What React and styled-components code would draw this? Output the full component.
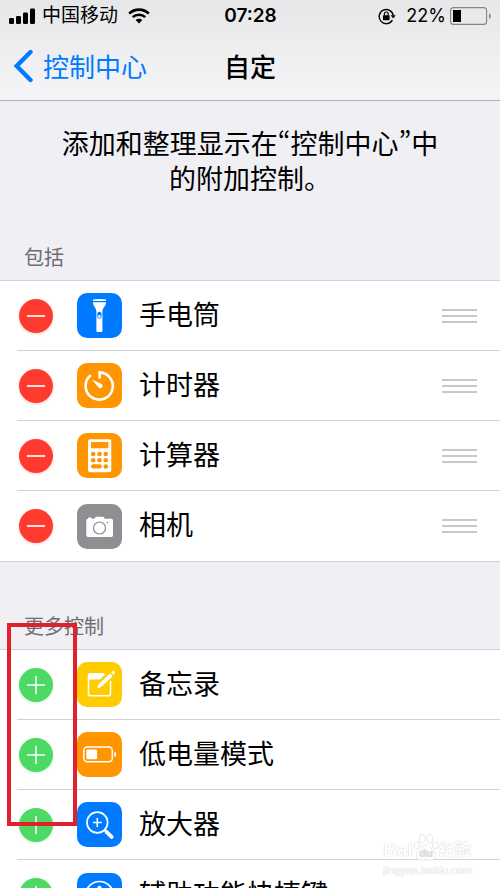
import styled, { createGlobalStyle } from "styled-components";

const GlobalStyle = createGlobalStyle`
  * {
    box-sizing: border-box;
  }
  body {
    margin: 0;
    background: #efeff4;
    color: #000;
    font-family: Inter, "Noto Sans CJK SC", sans-serif;
  }
`;

const Screen = styled.div`
  position: relative;
  display: flex;
  flex-direction: column;
  height: 100vh;
  overflow: hidden;
`;

const Header = styled.header`
  flex: none;
  background: linear-gradient(#e7e7e9, #f5f5f7);
  border-bottom: 1px solid #b2b2b6;
`;

const StatusBar = styled.div`
  display: grid;
  grid-template-columns: 1fr auto 1fr;
  align-items: center;
  height: 32px;
  padding: 0 8px 0 9px;
  font-size: 19px;
  line-height: 24px;
`;

const StatusGroup = styled.div`
  display: flex;
  align-items: center;
  justify-content: ${(props) => (props.$end ? "flex-end" : "flex-start")};
  svg {
    flex: none;
  }
`;

const Carrier = styled.span`
  margin: 0 10px 0 6px;
`;

const Time = styled.time`
  font-weight: 600;
`;

const Percent = styled.span`
  margin: 0 4px 0 10px;
  font-size: 18px;
`;

const NavBar = styled.nav`
  display: grid;
  grid-template-columns: 1fr auto 1fr;
  align-items: center;
  height: 68px;
  padding: 0 13px;
  font-family: "Noto Sans CJK SC", sans-serif;
`;

const BackLink = styled.a`
  display: flex;
  align-items: center;
  gap: 9px;
  color: #007aff;
  font-size: 26px;
  line-height: 34px;
  text-decoration: none;
`;

const Title = styled.h1`
  margin: 0;
  font-size: 26px;
  line-height: 34px;
  font-weight: 500;
`;

const Content = styled.main`
  flex: 1;
  min-height: 0;
  overflow-y: auto;
  scrollbar-width: none;
`;

/* pwid keeps the curly quotes narrow */
const Intro = styled.p`
  margin: 0;
  padding: 24px 56px 0;
  font-family: "Noto Sans CJK SC", sans-serif;
  font-feature-settings: "pwid";
  font-size: 27px;
  line-height: 35px;
  text-align: center;
`;

const Section = styled.section`
  position: relative;
  margin-top: 51px;
  & + & {
    margin-top: 53px;
  }
`;

const SectionTitle = styled.h2`
  margin: 0;
  padding: 0 24px 10px;
  color: #6d6d72;
  font-size: 20px;
  line-height: 24px;
  font-weight: 400;
`;

const List = styled.ul`
  display: grid;
  grid-auto-rows: 1fr;
  min-height: 282px;
  margin: 0;
  padding: 0 0 0 17px;
  list-style: none;
  background: #fff;
  border-top: 1px solid #d2d2d6;
  border-bottom: 1px solid #d2d2d6;
`;

const Row = styled.li`
  display: flex;
  align-items: center;
  padding: 0 23px 0 2px;
  border-bottom: 1px solid #d2d2d6;
  &:last-child {
    border-bottom: 0;
  }
`;

const RoundButton = styled.button`
  flex: none;
  display: flex;
  align-items: center;
  justify-content: center;
  width: 34px;
  height: 34px;
  padding: 0;
  border: 0;
  border-radius: 50%;
  color: #fff;
  background: ${(props) => (props.$add ? "#4cd964" : "#ff3b30")};
  box-shadow: 0 1px 3px ${(props) => (props.$add ? "#4cd96444" : "#ff3b3044")};
`;

const Tile = styled.span`
  flex: none;
  width: 45px;
  height: 45px;
  margin: 0 17px 0 24px;
  border-radius: 10px;
  background: ${(props) => props.$color};
  svg {
    display: block;
  }
`;

const Label = styled.span`
  flex: 1;
  font-size: 27px;
  line-height: 34px;
  white-space: nowrap;
`;

const Handle = styled.button`
  display: grid;
  gap: 4px;
  width: 35px;
  padding: 0;
  border: 0;
  background: none;
  cursor: grab;
  span {
    height: 2px;
    background: #c7c7cc;
  }
`;

/* marks the add buttons, lies over the list */
const Highlight = styled.div`
  position: absolute;
  top: 8px;
  left: 7px;
  width: 70px;
  height: 203px;
  border: 4px solid #e0202a;
  pointer-events: none;
`;

const Watermark = styled.div`
  position: absolute;
  right: 28px;
  bottom: 10px;
  color: #fff;
  font-family: "Liberation Sans", "Noto Sans CJK SC", sans-serif;
  text-shadow: 0 0 1px #ccc, 0 0 1px #ddd;
  pointer-events: none;
`;

const WatermarkLogo = styled.div`
  display: flex;
  align-items: flex-end;
  height: 30px;
  line-height: 24px;
  font-weight: 700;
`;

const WatermarkBrand = styled.span`
  font-size: 19px;
`;

const WatermarkCn = styled.span`
  font-size: 16px;
`;

const WatermarkUrl = styled.div`
  font-size: 11px;
  line-height: 16px;
`;

const SignalIcon = () => (
  <svg width="27" height="16" viewBox="0 0 27 16">
    <rect x="0" y="10" width="5" height="6" rx="1.3" />
    <rect x="7" y="8" width="5" height="8" rx="1.3" />
    <rect x="14" y="4.500" width="5" height="11.500" rx="1.3" />
    <rect x="21" y="0.500" width="5" height="15.500" rx="1.3" />
  </svg>
);

const WifiIcon = () => (
  <svg width="22" height="16" viewBox="0 0 22 16" fill="none" stroke="#000">
    <path d="M1.2 5.6a14 14 0 0 1 19.6 0" strokeWidth="2.7" />
    <path d="M4.7 9.2a9 9 0 0 1 12.6 0" strokeWidth="2.5" />
    <path d="M11 15.5 7.6 12.1a4.9 4.9 0 0 1 6.800 0z" fill="#000" stroke="none" />
  </svg>
);

const LockIcon = () => (
  <svg width="18" height="17" viewBox="0 0 18 17" fill="none" stroke="#000" strokeWidth="1.4">
    <path d="M14.4 12.2A7.1 7.1 0 1 1 15.3 7.4" />
    <path d="M12.6 7.2h5.2l-2.6 3.4z" fill="#000" stroke="none" />
    <rect x="5" y="7.2" width="6.6" height="5" rx="0.6" fill="#000" stroke="none" />
    <path d="M6.4 7.4V5.9a1.9 1.9 0 0 1 3.8 0v1.5" strokeWidth="1.2" />
  </svg>
);

const BatteryIcon = () => (
  <svg width="42" height="18" viewBox="0 0 42 18">
    <rect x="0.6" y="0.6" width="36" height="16.8" rx="3" fill="none" stroke="#858587" strokeWidth="1.1" />
    <rect x="3" y="3" width="8" height="12" />
    <path d="M39 6.2c2.4.8 2.4 4.8 0 5.6z" fill="#858587" />
  </svg>
);

const BackIcon = () => (
  <svg width="21" height="34" viewBox="0 0 21 34" fill="none" stroke="#007aff" strokeWidth="4.400">
    <path d="M17.500 3 3.700 17 17.500 31" strokeLinecap="round" />
  </svg>
);

const MinusIcon = () => (
  <svg width="18" height="18" viewBox="0 0 18 18" stroke="#fff" strokeWidth="1.7">
    <path d="M0 9h18" />
  </svg>
);

const PlusIcon = () => (
  <svg width="18" height="18" viewBox="0 0 18 18" stroke="#fff" strokeWidth="1.6">
    <path d="M0 9h18M9 0v18" />
  </svg>
);

const TileSvg = ({ children }) => (
  <svg width="45" height="45" viewBox="0 0 45 45" fill="#fff">
    {children}
  </svg>
);

const Flashlight = () => (
  <TileSvg>
    <path d="M16 6.5q6.5-1 13 0v1.5H16z" />
    <path d="M16 9.2h13c0 4.5-3.6 5.3-3.6 9.3V38q0 1-1 1h-4q-1 0-1-1V18.5c0-4-3.4-4.8-3.4-9.3z" />
    <rect x="20.3" y="18.7" width="4.2" height="7" rx="2.1" fill="#007aff" />
    <circle cx="22.400" cy="23.400" r="1.300" />
  </TileSvg>
);

const Timer = () => (
  <TileSvg>
    <path d="M13.8 12.3A13.6 13.6 0 1 0 22.6 9.400V15.500" fill="none" stroke="#fff" strokeWidth="2.6" />
    <path d="M14.8 16.4 24 20.8a2.3 2.3 0 1 1-2.8 3.2z" />
  </TileSvg>
);

const Calculator = () => (
  <TileSvg>
    <rect x="11" y="6.3" width="23.3" height="33" rx="2.2" />
    <g fill="#ff9500">
      <rect x="14" y="9" width="17.3" height="6.3" rx="0.6" />
      {[16.2, 22.5, 28.8].map((x) => (
        <g key={x}>
          <circle cx={x} cy="21" r="2.3" />
          <circle cx={x} cy="27.3" r="2.3" />
        </g>
      ))}
      <rect x="14" y="31.3" width="10.8" height="4.2" rx="2" />
      <circle cx="28.8" cy="33.500" r="2.3" />
    </g>
  </TileSvg>
);

const Camera = () => (
  <TileSvg>
    <path d="M11 14.8v-.8q0-.6.6-.6h2.500q.6 0 .6.6v.8h2.200c1.200 0 1.300-2 2.600-2h6.200c1.300 0 1.400 2 2.700 2h6q1.600 0 1.600 1.600v14.900q0 1.600-1.600 1.600H10.900q-1.600 0-1.600-1.600V16.400q0-1.600 1.600-1.600z" />
    <circle cx="22.5" cy="24" r="6" fill="none" stroke="#8e8e93" strokeWidth="1.2" />
    <circle cx="30.4" cy="18.6" r="0.9" fill="#8e8e93" />
  </TileSvg>
);

const Notes = () => (
  <TileSvg>
    <path
      d="M27 11.8H13.5q-2 0-2 2v18q0 2 2 2h18q2 0 2-2V19"
      fill="none"
      stroke="#fff"
      strokeWidth="1.6"
    />
    <path d="M11.5 12h17l-5.500 5.500H11.5z" />
    <path d="m20 26.600 1.800-4.600L33 11.4l2.700 2.800L24.5 24.8z" />
    <path d="m34 10.500 1.200-1.200q1.200-1 2.300.2 1 1.200 0 2.300l-1 1z" />
  </TileSvg>
);

const LowPower = () => (
  <TileSvg>
    <rect x="6.8" y="15" width="28.5" height="14.8" rx="3.5" fill="none" stroke="#fff" strokeWidth="1.5" />
    <rect x="9.3" y="17.5" width="10.8" height="9.8" rx="1.2" />
    <path d="M37.3 19.600c2.300.8 2.300 4.800 0 5.600z" />
  </TileSvg>
);

const Magnifier = () => (
  <TileSvg>
    <g fill="none" stroke="#fff">
      <circle cx="20.3" cy="20.5" r="10.3" strokeWidth="1.7" />
      <path d="M15.8 20.5h9M20.3 16v9" strokeWidth="1.5" />
      <path d="m27.5 27.800 2.500 2.500" strokeWidth="2" />
      <path d="m29.5 29.800 5.200 5.200" strokeWidth="3.8" strokeLinecap="round" />
    </g>
  </TileSvg>
);

const Accessibility = () => (
  <TileSvg>
    <circle cx="22.5" cy="22.5" r="14" fill="none" stroke="#fff" strokeWidth="1.7" />
    <circle cx="22.5" cy="15" r="2.2" />
    <path
      d="M14 19.5 20 21h5l6-1.500M20.5 21v5L18 33M24.5 21v5l2.500 7"
      fill="none"
      stroke="#fff"
      strokeWidth="2"
      strokeLinecap="round"
    />
  </TileSvg>
);

const PawIcon = () => (
  <svg width="26" height="29" viewBox="0 0 28 30" fill="#fff" stroke="#dcdcdc" strokeWidth="0.8">
    <ellipse cx="4" cy="12.5" rx="3" ry="4" />
    <ellipse cx="10" cy="5.5" rx="3" ry="4.5" />
    <ellipse cx="18" cy="5.5" rx="3" ry="4.5" />
    <ellipse cx="24" cy="12.5" rx="3" ry="4" />
    <path d="M14 12c4 0 5 4.500 8 7s3.500 9-1.500 9.500c-3 .3-4-.5-6.500-.5s-3.500.8-6.500.5C2.500 28 3 21.500 6 19s4-7 8-7z" />
    <text x="14" y="25" textAnchor="middle" fontSize="12" fontFamily="Liberation Sans" fill="#e2e2e2" stroke="none">
      du
    </text>
  </svg>
);

const included = [
  { name: "手电筒", color: "#007aff", Icon: Flashlight },
  { name: "计时器", color: "#ff9500", Icon: Timer },
  { name: "计算器", color: "#ff9500", Icon: Calculator },
  { name: "相机", color: "#8e8e93", Icon: Camera },
];

const more = [
  { name: "备忘录", color: "#ffcc00", Icon: Notes },
  { name: "低电量模式", color: "#ff9500", Icon: LowPower },
  { name: "放大器", color: "#007aff", Icon: Magnifier },
  { name: "辅助功能快捷键", color: "#007aff", Icon: Accessibility },
];

const ControlRow = ({ item, add }) => (
  <Row>
    <RoundButton type="button" $add={add} aria-label={(add ? "添加" : "移除") + item.name}>
      {add ? <PlusIcon /> : <MinusIcon />}
    </RoundButton>
    <Tile $color={item.color}>
      <item.Icon />
    </Tile>
    <Label>{item.name}</Label>
    {!add && (
      <Handle type="button" aria-label={"移动" + item.name}>
        <span />
        <span />
        <span />
      </Handle>
    )}
  </Row>
);

const App = () => {
  return (
    <Screen lang="zh-CN">
      <GlobalStyle />
      <Header>
        <StatusBar>
          <StatusGroup>
            <SignalIcon />
            <Carrier>中国移动</Carrier>
            <WifiIcon />
          </StatusGroup>
          <Time>07:28</Time>
          <StatusGroup $end>
            <LockIcon />
            <Percent>22%</Percent>
            <BatteryIcon />
          </StatusGroup>
        </StatusBar>
        <NavBar>
          <BackLink href="#control-center">
            <BackIcon />
            控制中心
          </BackLink>
          <Title>自定</Title>
        </NavBar>
      </Header>
      <Content>
        <Intro>添加和整理显示在“控制中心”中的附加控制。</Intro>
        <Section>
          <SectionTitle>包括</SectionTitle>
          <List>
            {included.map((item) => (
              <ControlRow key={item.name} item={item} />
            ))}
          </List>
        </Section>
        <Section>
          <SectionTitle>更多控制</SectionTitle>
          <List>
            {more.map((item) => (
              <ControlRow key={item.name} item={item} add />
            ))}
          </List>
          <Highlight />
        </Section>
      </Content>
      <Watermark>
        <WatermarkLogo>
          <WatermarkBrand>Bai</WatermarkBrand>
          <PawIcon />
          <WatermarkCn>经验</WatermarkCn>
        </WatermarkLogo>
        <WatermarkUrl>jingyan.baidu.com</WatermarkUrl>
      </Watermark>
    </Screen>
  );
};

export default App;
